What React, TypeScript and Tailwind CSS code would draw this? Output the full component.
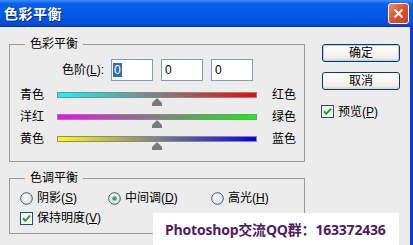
import React from "react";

const font = { fontFamily: '"Liberation Sans","Noto Sans CJK SC",sans-serif' };

function Check() {
  return (
    <svg width="13" height="13" viewBox="0 0 13 13" className="block">
      <rect x="0.5" y="0.5" width="12" height="12" fill="#f6f6f2" stroke="#1c5180" />
      <path d="M3 6.3 L5.3 8.8 L10 3.6" fill="none" stroke="#21a121" strokeWidth="2" />
    </svg>
  );
}

function Radio({ on }: { on?: boolean }) {
  return (
    <svg width="13" height="13" viewBox="0 0 13 13" className="block">
      <defs>
        <radialGradient id={on ? "rg1" : "rg0"} cx="0.35" cy="0.35" r="0.8">
          <stop offset="0" stopColor="#ffffff" />
          <stop offset="1" stopColor="#d4d8de" />
        </radialGradient>
      </defs>
      <circle cx="6.5" cy="6.5" r="5.8" fill={`url(#${on ? "rg1" : "rg0"})`} stroke="#2a5a8c" strokeWidth="1" />
      {on && <circle cx="6.5" cy="6.5" r="2.3" fill="#2fb52f" />}
    </svg>
  );
}

function Thumb() {
  return (
    <svg width="10" height="8" viewBox="0 0 10 8" className="block">
      <path d="M5 0 L8.5 3.5 L10 5 L10 8 L0 8 L0 5 L1.5 3.5 Z" fill="#7b7b7b" />
    </svg>
  );
}

function SliderRow({ left, right, grad }: { left: string; right: string; grad: string }) {
  return (
    <div className="flex flex-col h-[22px]">
      <div className="flex items-center h-[6px] pl-[10px]">
        <span className="w-[37px] leading-[14px]">{left}</span>
        <div className={`w-[200px] h-[6px] border border-[#8a8a8a] ${grad}`} />
        <span className="ml-[15px] leading-[14px]">{right}</span>
      </div>
      <div className="ml-[47px] w-[200px] flex justify-center">
        <Thumb />
      </div>
    </div>
  );
}

export default function App() {
  return (
    <div className="relative w-[413px] h-[245px] overflow-hidden bg-[#ececec] text-[12px] text-black" style={font}>
      <div className="h-[27px] flex items-center justify-between pl-[4px] pr-[4px] bg-[linear-gradient(to_bottom,#3d8ff9_0%,#0b5fe9_14%,#0058e6_55%,#0050dc_85%,#0038b8_100%)]">
        <span className="text-white font-bold text-[14px] tracking-[0.5px] [text-shadow:1px_1px_0_#0b2a8a]" style={{ fontFamily: '"Noto Sans CJK SC",sans-serif' }}>
          色彩平衡
        </span>
        <div className="w-[21px] h-[21px] rounded-[3px] border border-white bg-[linear-gradient(to_bottom_right,#f08a6a,#e0502c_50%,#c8401e)] flex items-center justify-center">
          <svg width="11" height="11" viewBox="0 0 11 11">
            <path d="M1.5 1.5 L9.5 9.5 M9.5 1.5 L1.5 9.5" stroke="white" strokeWidth="2" />
          </svg>
        </div>
      </div>

      <div className="flex h-[218px] border-r-[3px] border-[#0a3bd6]">
        <div className="w-[305px] pl-[9px] pt-[9px] flex flex-col">
          <fieldset className="w-[296px] h-[126px] border border-[#999999]">
            <legend className="ml-[15px] px-[5px] leading-[17px]">色彩平衡</legend>
            <div className="flex items-center mt-[6px] h-[22px] pl-[52px]">
              <span className="w-[49px] leading-[14px]">
                色阶(<span className="underline">L</span>):
              </span>
              <div className="w-[42px] h-[22px] border border-[#7f9db9] bg-white flex items-center pl-[1px]">
                <span className="bg-[#316ac5] text-white px-[1px] leading-[14px]">0</span>
              </div>
              <div className="ml-[8px] w-[42px] h-[22px] border border-[#7f9db9] bg-white flex items-center pl-[3px]">
                <span className="leading-[14px]">0</span>
              </div>
              <div className="ml-[8px] w-[42px] h-[22px] border border-[#7f9db9] bg-white flex items-center pl-[3px]">
                <span className="leading-[14px]">0</span>
              </div>
            </div>
            <div className="mt-[11px] flex flex-col">
              <SliderRow left="青色" right="红色" grad="bg-[linear-gradient(to_right,#00ffff,#808080_50%,#ff0000)]" />
              <SliderRow left="洋红" right="绿色" grad="bg-[linear-gradient(to_right,#ff00ff,#808080_50%,#00ff00)]" />
              <SliderRow left="黄色" right="蓝色" grad="bg-[linear-gradient(to_right,#ffff00,#808080_50%,#0000ff)]" />
            </div>
          </fieldset>

          <fieldset className="mt-[8px] w-[296px] h-[64px] border border-[#999999]">
            <legend className="ml-[15px] px-[5px] leading-[17px]">色调平衡</legend>
            <div className="flex items-center mt-[4px] h-[14px] pl-[10px]">
              <div className="w-[88px] flex items-center gap-[4px]">
                <Radio />
                <span className="leading-[14px]">
                  阴影(<span className="underline">S</span>)
                </span>
              </div>
              <div className="w-[103px] flex items-center gap-[4px]">
                <Radio on />
                <span className="leading-[14px]">
                  中间调(<span className="underline">D</span>)
                </span>
              </div>
              <div className="flex items-center gap-[4px]">
                <Radio />
                <span className="leading-[14px]">
                  高光(<span className="underline">H</span>)
                </span>
              </div>
            </div>
            <div className="flex items-center mt-[6px] h-[14px] pl-[10px] gap-[4px]">
              <Check />
              <span className="leading-[14px]">
                保持明度(<span className="underline">V</span>)
              </span>
            </div>
          </fieldset>
        </div>

        <div className="pl-[17px] pt-[17px] flex flex-col">
          <button className="w-[78px] h-[18px] rounded-[3px] border border-[#003c74] bg-[linear-gradient(to_bottom,#ffffff,#f0f0ea_80%,#d6d0c5)] shadow-[inset_0_0_0_1px_#b8d0f0] leading-[14px] flex items-center justify-center">
            确定
          </button>
          <button className="mt-[10px] w-[78px] h-[18px] rounded-[3px] border border-[#003c74] bg-[linear-gradient(to_bottom,#ffffff,#f0f0ea_80%,#d6d0c5)] leading-[14px] flex items-center justify-center">
            取消
          </button>
          <div className="mt-[15px] -ml-[1px] flex items-center gap-[4px] h-[13px]">
            <Check />
            <span className="leading-[14px]">
              预览(<span className="underline">P</span>)
            </span>
          </div>
        </div>
      </div>

      <div className="absolute left-[153px] top-[213px] w-[246px] h-[32px] bg-white flex items-center pl-[12px]">
        <span className="font-bold text-[14px] tracking-[-0.2px] text-[#4e1c63] whitespace-nowrap" style={{ fontFamily: '"Open Sans","Noto Sans CJK SC",sans-serif' }}>
          Photoshop交流QQ群：163372436
        </span>
      </div>
    </div>
  );
}
